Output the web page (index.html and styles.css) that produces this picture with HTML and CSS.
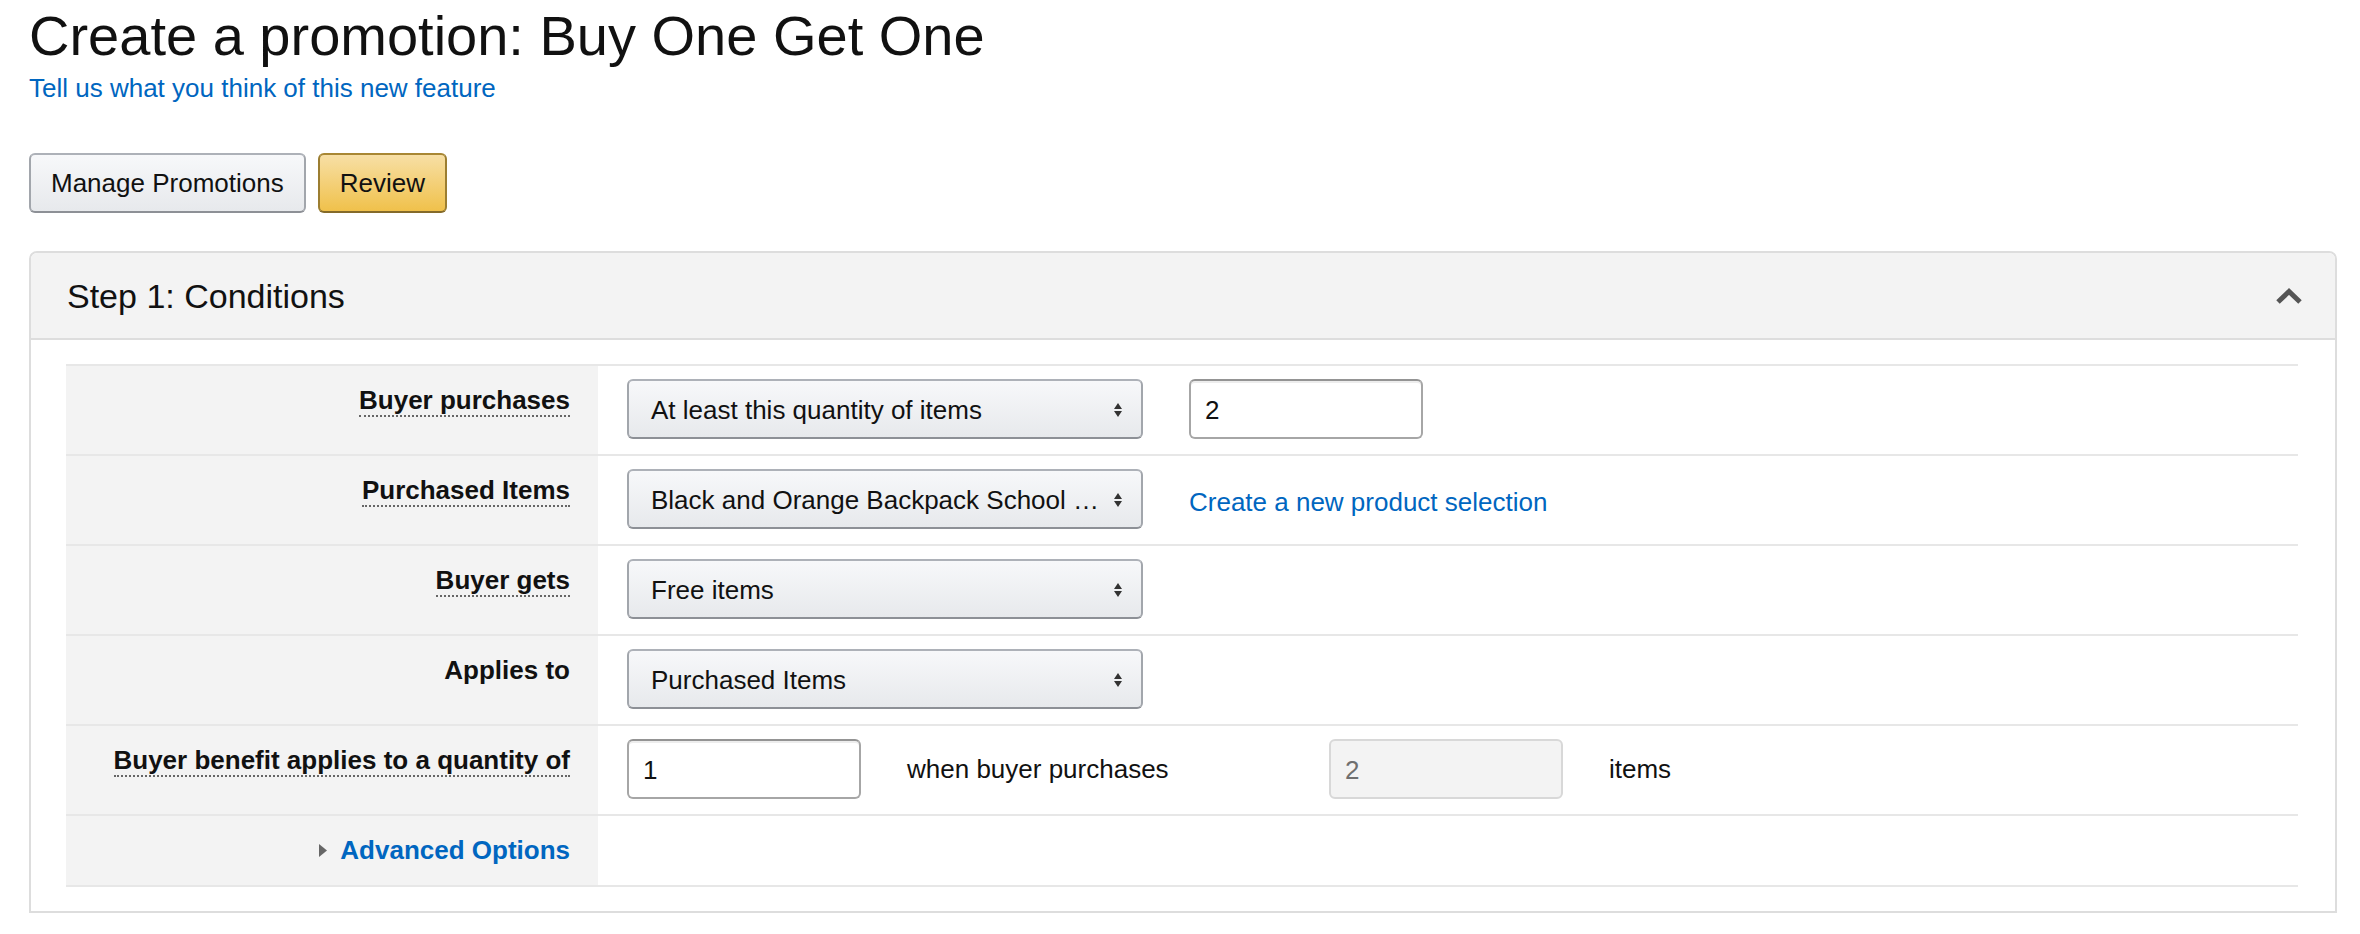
FILE: index.html
```html
<!DOCTYPE html>
<html lang="en">
<head>
    <meta charset="UTF-8">
    <title>Create a promotion: Buy One Get One</title>
    <link rel="stylesheet" href="styles.css">
</head>
<body>
    <div class="page">
        <h1>Create a promotion: Buy One Get One</h1>
        <a class="feedback" href="#">Tell us what you think of this new feature</a>

        <div class="actions">
            <button class="btn">Manage Promotions</button>
            <button class="btn btn-primary">Review</button>
        </div>

        <section class="card">
            <header class="card-head">
                <h2>Step 1: Conditions</h2>
                <svg class="collapse" width="26" height="16" viewBox="0 0 26 16">
                    <polyline points="2,14 13,3.5 24,14" fill="none" stroke="#555" stroke-width="5"/>
                </svg>
            </header>

            <div class="card-body">
                <div class="form-table">
                    <div class="row">
                        <div class="label"><span class="hint">Buyer purchases</span></div>
                        <div class="field">
                            <div class="dropdown">
                                <span class="dropdown-text">At least this quantity of items</span>
                                <svg width="8" height="14" viewBox="0 0 8 14"><path d="M4 0 8 6 0 6Z M0 8 8 8 4 14Z" fill="#333"/></svg>
                            </div>
                            <input class="text-input" type="text" value="2">
                        </div>
                    </div>

                    <div class="row">
                        <div class="label"><span class="hint">Purchased Items</span></div>
                        <div class="field">
                            <div class="dropdown">
                                <span class="dropdown-text">Black and Orange Backpack School …</span>
                                <svg width="8" height="14" viewBox="0 0 8 14"><path d="M4 0 8 6 0 6Z M0 8 8 8 4 14Z" fill="#333"/></svg>
                            </div>
                            <a class="field-link" href="#">Create a new product selection</a>
                        </div>
                    </div>

                    <div class="row">
                        <div class="label"><span class="hint">Buyer gets</span></div>
                        <div class="field">
                            <div class="dropdown">
                                <span class="dropdown-text">Free items</span>
                                <svg width="8" height="14" viewBox="0 0 8 14"><path d="M4 0 8 6 0 6Z M0 8 8 8 4 14Z" fill="#333"/></svg>
                            </div>
                        </div>
                    </div>

                    <div class="row">
                        <div class="label">Applies to</div>
                        <div class="field">
                            <div class="dropdown">
                                <span class="dropdown-text">Purchased Items</span>
                                <svg width="8" height="14" viewBox="0 0 8 14"><path d="M4 0 8 6 0 6Z M0 8 8 8 4 14Z" fill="#333"/></svg>
                            </div>
                        </div>
                    </div>

                    <div class="row">
                        <div class="label"><span class="hint">Buyer benefit applies to a quantity of</span></div>
                        <div class="field">
                            <input class="text-input" type="text" value="1">
                            <span class="field-text wide">when buyer purchases</span>
                            <input class="text-input" type="text" value="2" disabled>
                            <span class="field-text">items</span>
                        </div>
                    </div>

                    <div class="row row-last">
                        <div class="label label-advanced">
                            <svg width="8" height="13" viewBox="0 0 8 13"><path d="M0 0 8 6.5 0 13Z" fill="#666"/></svg>
                            <a href="#">Advanced Options</a>
                        </div>
                        <div class="field"></div>
                    </div>
                </div>
            </div>
        </section>
    </div>
</body>
</html>
```

FILE: styles.css
```css
body {
    margin: 0;
    background-color: #fff;
    color: #111;
    font-family: "Liberation Sans", Arial, sans-serif;
    font-size: 26px;
    line-height: 38px;
}
.page {
    padding: 0 23px 0 29px;
}
h1 {
    margin: 0;
    padding-top: 2px;
    font-size: 56px;
    line-height: 67px;
    font-weight: 400;
}
a {
    color: #0066c0;
    text-decoration: none;
}
.feedback {
    display: block;
}
.actions {
    display: flex;
    gap: 12px;
    margin-top: 46px;
}
.btn {
    height: 60px;
    padding: 0 20px;
    border: 2px solid;
    border-color: #adb1b8 #a2a6ac #8d9096;
    border-radius: 6px;
    background: linear-gradient(#f7f8fa, #e7e9ec);
    color: #111;
    font-family: inherit;
    font-size: 26px;
    cursor: pointer;
}
.btn-primary {
    border-color: #a88734 #9c7e31 #846a29;
    background: linear-gradient(#f7dfa5, #f0c14b);
}
.card {
    margin-top: 38px;
    border: 2px solid #ddd;
    border-radius: 8px 8px 0 0;
}
.card-head {
    display: flex;
    align-items: center;
    justify-content: space-between;
    height: 85px;
    padding: 0 33px 0 36px;
    background-color: #f3f3f3;
    border-bottom: 2px solid #ddd;
    border-radius: 6px 6px 0 0;
}
.card-head h2 {
    margin: 0;
    font-size: 34px;
    line-height: 40px;
    font-weight: 400;
}
.card-body {
    padding: 24px 37px 24px 35px;
}
.row {
    display: grid;
    grid-template-columns: 532px 1fr;
    border-top: 2px solid #e7e7e7;
}
.row-last {
    border-bottom: 2px solid #e7e7e7;
}
.label {
    padding: 15px 28px 0 0;
    background-color: #f3f3f3;
    text-align: right;
    font-weight: 700;
}
.hint {
    border-bottom: 2px dotted #666;
}
.label-advanced {
    display: flex;
    align-items: center;
    justify-content: flex-end;
    gap: 13px;
    padding-bottom: 16px;
}
.field {
    display: flex;
    align-items: flex-start;
    gap: 46px;
    padding: 13px 0 15px 29px;
}
.dropdown {
    display: flex;
    align-items: center;
    box-sizing: border-box;
    width: 516px;
    height: 60px;
    padding: 2px 19px 0 22px;
    border: 2px solid;
    border-color: #adb1b8 #a2a6ac #8d9096;
    border-radius: 6px;
    background: linear-gradient(#f7f8fa, #e7e9ec);
}
.dropdown-text {
    flex: 1;
    white-space: nowrap;
}
.text-input {
    box-sizing: border-box;
    width: 234px;
    height: 60px;
    padding: 2px 14px 0;
    border: 2px solid #a6a6a6;
    border-top-color: #949494;
    border-radius: 6px;
    box-shadow: inset 0 2px 0 rgba(0, 0, 0, 0.07);
    color: #111;
    font-family: inherit;
    font-size: 26px;
    outline: none;
}
.text-input:disabled {
    background-color: #f3f3f3;
    border-color: #d8d8d8;
    box-shadow: none;
    color: #6f6f6f;
}
.field-link {
    line-height: 54px;
    padding-top: 6px;
}
.field-text {
    line-height: 60px;
}
.field-text.wide {
    width: 376px;
}
```
